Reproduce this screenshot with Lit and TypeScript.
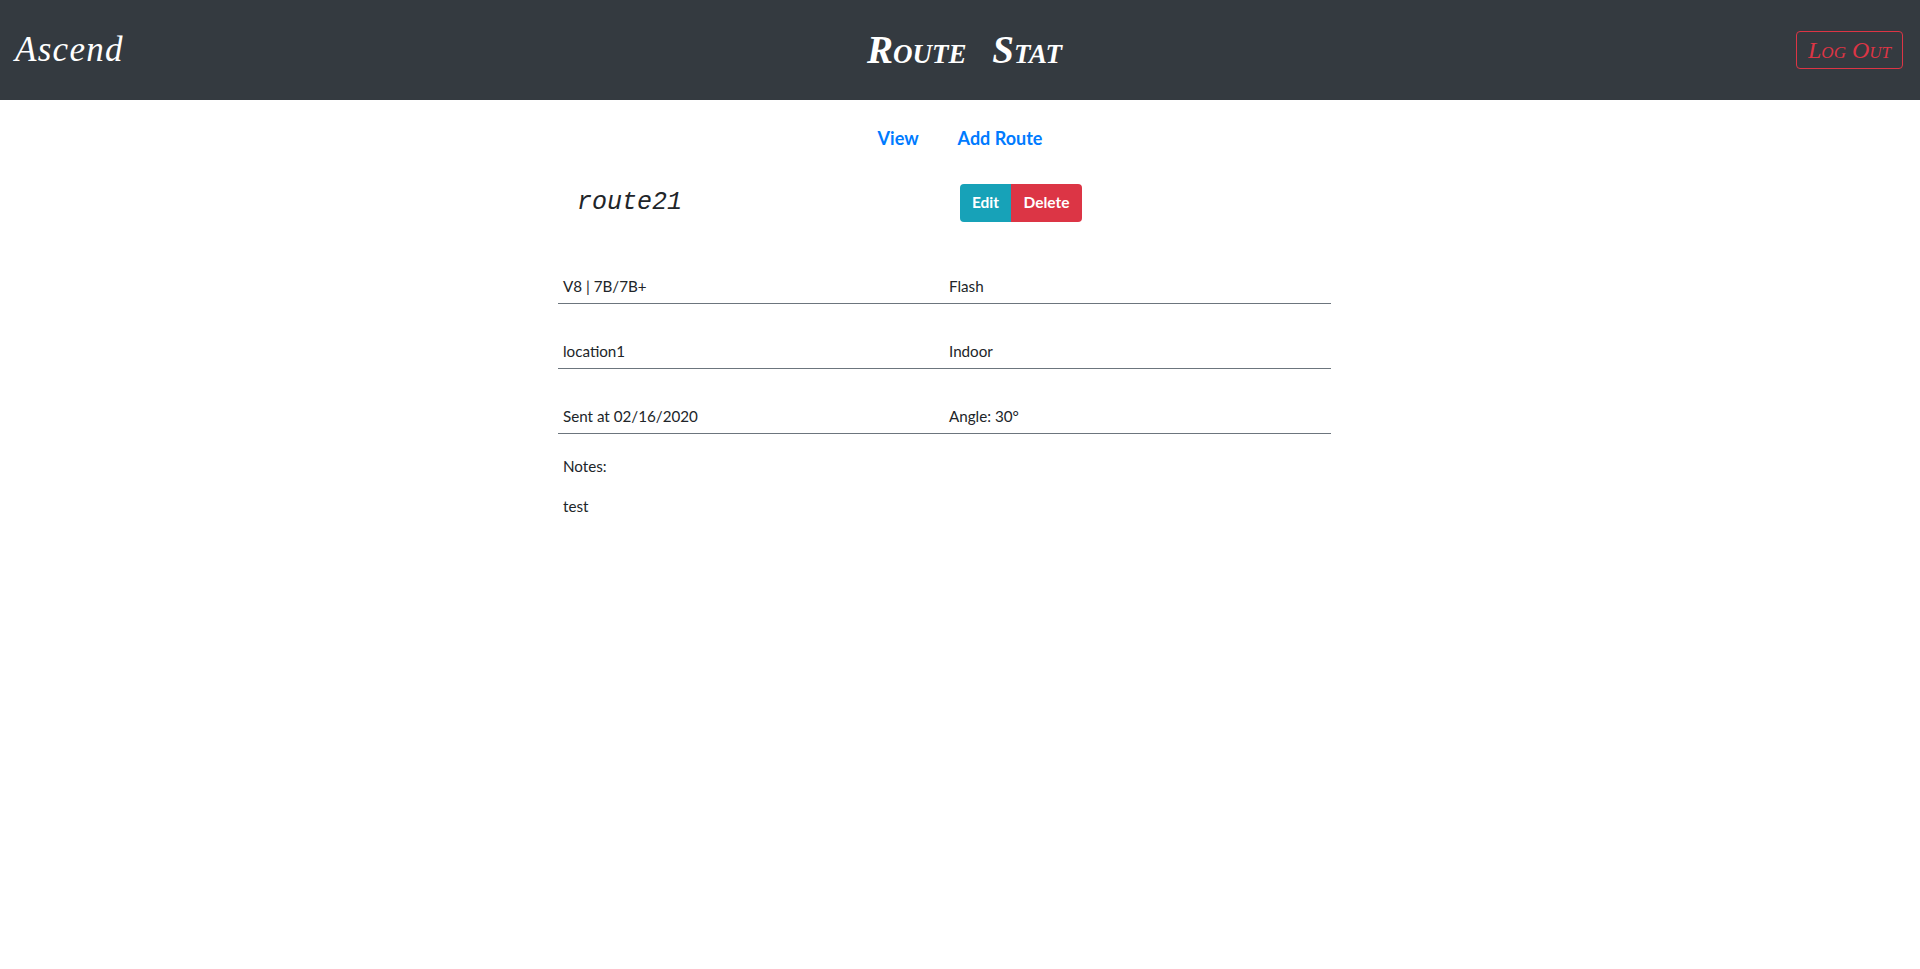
import { LitElement, html, css } from "lit";
import { customElement } from "lit/decorators.js";

@customElement("app-root")
export class AppRoot extends LitElement {
  static styles = css`
    :host { display: block; min-height: 969px; background: #fff; color: #212529; font-family: "Lato", "Open Sans", sans-serif; font-size: 15.2px; line-height: 24px; }
    .bar { height: 100px; background: #343a40; display: flex; align-items: center; justify-content: space-between; padding: 0 17px 0 15px; box-sizing: border-box; }
    .brand { width: 108px; font-family: "Liberation Serif", serif; font-style: italic; font-size: 35px; line-height: 44px; color: #fff; white-space: nowrap; letter-spacing: 1.3px; }
    .title { font-family: "Liberation Serif", serif; font-style: italic; font-weight: 700; font-variant: small-caps; font-size: 39px; line-height: 44px; color: #fff; padding-left: 10px; word-spacing: 16px; white-space: nowrap; }
    .logout { width: 107px; height: 38px; box-sizing: border-box; border: 1px solid #dc3545; border-radius: 4px; background: transparent; color: #dc3545; font-family: "Liberation Serif", serif; font-style: italic; font-variant: small-caps; font-size: 24px; padding: 0; white-space: nowrap; }
    .nav { display: flex; justify-content: center; gap: 39px; padding-top: 26px; height: 50px; box-sizing: border-box; }
    .nav a { color: #007bff; font-weight: 700; font-size: 18px; line-height: 24px; text-decoration: none; }
    .main { margin-left: 558px; width: 773px; }
    .head { display: grid; grid-template-columns: 402px auto; align-items: center; height: 38px; margin-top: 34px; }
    .route { padding-left: 19px; font-family: "Liberation Mono", monospace; font-style: italic; font-size: 25px; color: #212529; }
    .btns { display: flex; }
    .btns button { height: 38px; border: 0; padding: 0 0 2px; color: #fff; font: 700 15.5px/24px "Lato", sans-serif; }
    .edit { width: 51px; background: #17a2b8; border-radius: 4px 0 0 4px; }
    .del { width: 71px; background: #dc3545; border-radius: 0 4px 4px 0; }
    .rows { margin-top: 52px; display: flex; flex-direction: column; gap: 35px; }
    .row { display: grid; grid-template-columns: 386px 1fr; height: 29px; border-bottom: 1px solid #6c757d; }
    .row span { padding-left: 5px; line-height: 24px; }
    .notes { padding: 20px 0 0 5px; }
    .notes p { margin: 0 0 16px; line-height: 24px; }
  `;

  render() {
    const rows = [
      ["V8 | 7B/7B+", "Flash"],
      ["location1", "Indoor"],
      ["Sent at 02/16/2020", "Angle: 30°"],
    ];
    return html`
      <header class="bar">
        <div class="brand">Ascend</div>
        <div class="title">Route Stat</div>
        <button class="logout">Log Out</button>
      </header>
      <nav class="nav"><a href="#">View</a><a href="#">Add Route</a></nav>
      <main class="main">
        <div class="head">
          <div class="route">route21</div>
          <div class="btns"><button class="edit">Edit</button><button class="del">Delete</button></div>
        </div>
        <div class="rows">
          ${rows.map((r) => html`<div class="row"><span>${r[0]}</span><span>${r[1]}</span></div>`)}
        </div>
        <div class="notes"><p>Notes:</p><p>test</p></div>
      </main>
    `;
  }
}
